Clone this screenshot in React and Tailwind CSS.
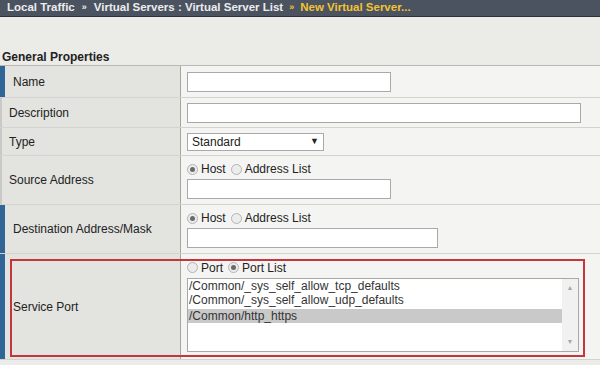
const Radio = ({ checked }) => (
  <span className="inline-flex w-[11px] h-[11px] rounded-full border border-[#b4b4b4] bg-[#ececec] items-center justify-center shrink-0">
    {checked && <span className="w-[5px] h-[5px] rounded-full bg-[#6a6a6a]" />}
  </span>
)

const TextBox = ({ w }) => <div className={`${w} h-[20px] bg-white border border-[#a9a9a9]`} />

const Row = ({ label, height, required, children }) => (
  <div className={`grid grid-cols-[181px_1fr] border-b border-[#d3d3cf] ${height}`}>
    <div
      className={`flex items-center bg-[#e3e3df] border-r border-[#a6a6a2] ${
        required ? 'border-l-[5px] border-l-[#2f6597] pl-[8px]' : 'border-l-2 border-l-[#c9c9c5] pl-[7px]'
      }`}
    >
      {label}
    </div>
    <div className="bg-[#f4f4f2] pl-[6px] flex flex-col justify-center">{children}</div>
  </div>
)

const RadioPair = ({ a, b, first }) => (
  <div className="flex items-center gap-[3px] h-[15px]">
    <Radio checked={first} />
    <span className="mr-[2px]">{a}</span>
    <Radio checked={!first} />
    <span>{b}</span>
  </div>
)

const ports = ['/Common/_sys_self_allow_tcp_defaults', '/Common/_sys_self_allow_udp_defaults', '/Common/http_https']

export default function App() {
  return (
    <div className="relative w-[600px] h-[365px] overflow-hidden bg-[#ebebe7] text-[12px] text-[#222] font-['Liberation_Sans',Arial,sans-serif]">
      <div className="h-[17px] bg-[#4b5361] border-b border-[#2c313a] flex items-center pl-[7px] font-bold text-[11.5px] text-[#ececec]">
        <span>Local Traffic</span>
        <span className="mx-[7px] text-[9px]">»</span>
        <span>Virtual Servers : Virtual Server List</span>
        <span className="mx-[6px] text-[9px] text-[#f2c331]">»</span>
        <span className="text-[#f2c331]">New Virtual Server...</span>
      </div>

      <div className="h-[32px]" />
      <div className="h-[16px] pl-[2px] font-bold leading-[16px]">General Properties</div>

      <div className="border-t border-[#b8b8b4]">
        <Row label="Name" height="h-[32px]" required>
          <TextBox w="w-[204px]" />
        </Row>
        <Row label="Description" height="h-[30px]">
          <TextBox w="w-[394px]" />
        </Row>
        <Row label="Type" height="h-[28px]">
          <div className="w-[137px] h-[18px] bg-white border border-[#a9a9a9] flex items-center justify-between px-[4px]">
            <span>Standard</span>
            <span className="text-[9px]">▼</span>
          </div>
        </Row>
        <Row label="Source Address" height="h-[49px]">
          <RadioPair a="Host" b="Address List" first />
          <div className="mt-[2px]">
            <TextBox w="w-[204px]" />
          </div>
        </Row>
        <Row label="Destination Address/Mask" height="h-[49px]" required>
          <RadioPair a="Host" b="Address List" first />
          <div className="mt-[2px]">
            <TextBox w="w-[251px]" />
          </div>
        </Row>
        <Row label="Service Port" height="h-[106px]" required>
          <div className="flex flex-col justify-start h-full pt-[6px]">
            <RadioPair a="Port" b="Port List" first={false} />
            <div className="mt-[3px] w-[392px] h-[74px] bg-white border border-[#a9a9a9] flex">
              <div className="flex-1 flex flex-col text-[#333]">
                {ports.map((p, i) => (
                  <div
                    key={p}
                    className={`h-[14px] leading-[14px] pl-[1px] ${i === 2 ? 'bg-[#c9c9c9] mt-[2px]' : ''}`}
                  >
                    {p}
                  </div>
                ))}
              </div>
              <div className="w-[16px] bg-[#f1f1f1] flex flex-col justify-between items-center py-[4px] text-[7px] text-[#a8a8a8]">
                <span>▲</span>
                <span>▼</span>
              </div>
            </div>
          </div>
        </Row>
      </div>

      <div className="absolute left-[10px] top-[259px] w-[575px] h-[98px] border-2 border-[#c4363b] pointer-events-none" />
    </div>
  )
}
